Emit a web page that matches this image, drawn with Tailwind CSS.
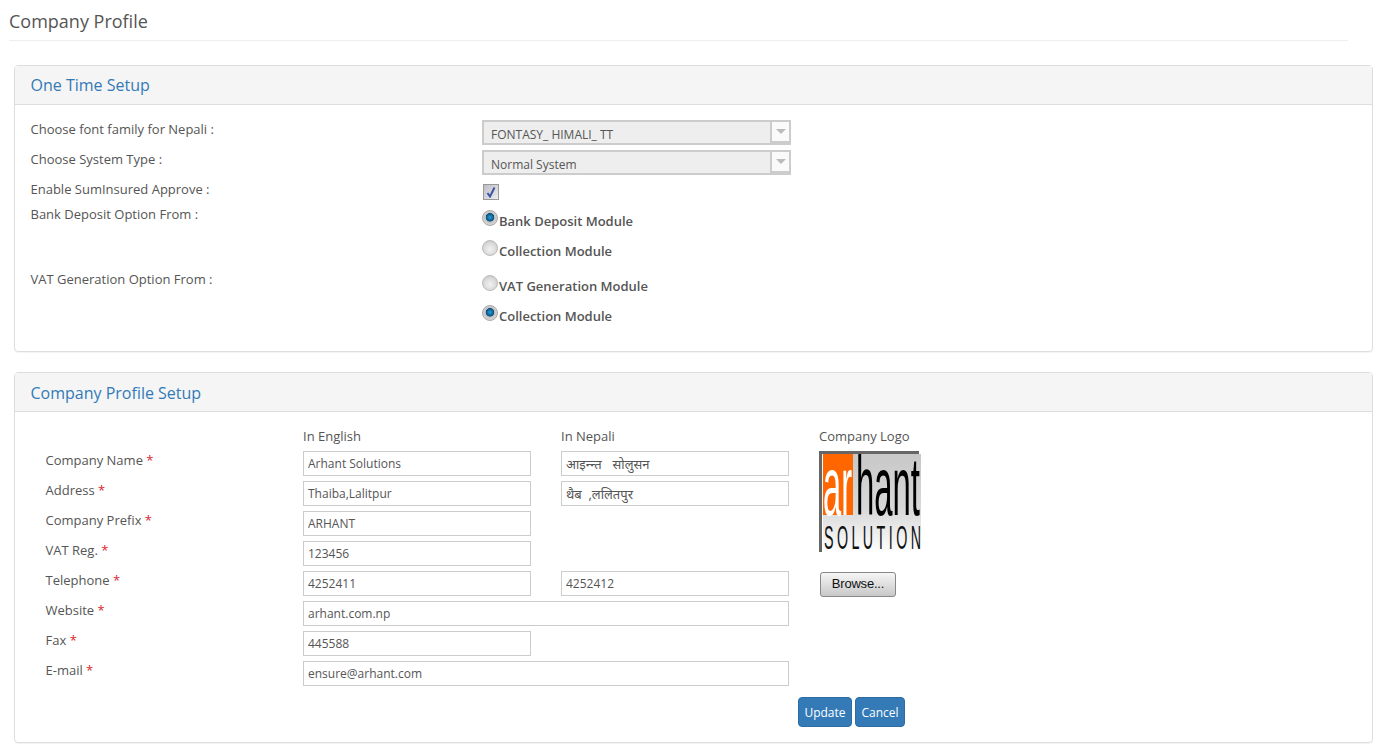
<!DOCTYPE html>
<html>
<head>
<meta charset="utf-8">
<script src="https://cdn.jsdelivr.net/npm/@tailwindcss/browser@4"></script>
</head>
<body class="bg-white font-['Open_Sans','Noto_Sans',sans-serif] text-[13px] text-[#555] overflow-hidden">
<div class="h-[746px] w-[1373px] overflow-hidden">
  <div class="ml-[9px] mr-[25px] h-[41px] border-b border-[#eee]">
    <h1 class="pt-[9px] text-[18px] leading-[25px] text-[#555]">Company Profile</h1>
  </div>

  <section class="ml-[14px] mt-[24px] h-[287px] rounded-[4px] border border-[#ddd] shadow-[0_1px_1px_rgba(0,0,0,0.05)]">
    <div class="h-[39px] border-b border-[#ddd] bg-[#f5f5f5] pl-[15.5px] text-[16px] leading-[39px] text-[#337ab7]">One Time Setup</div>
    <div class="pl-[15px] pt-[15px]">
      <div class="flex h-[30px]">
        <label class="w-[452px] pl-[0.5px] leading-[18px]">Choose font family for Nepali :</label>
        <div class="relative h-[25px] w-[309px]">
          <select class="h-[25px] w-full appearance-none border-2 border-[#ccc] bg-[#eee] pl-[7px] pt-[4px] text-[12px]"><option>FONTASY_ HIMALI_ TT</option></select>
          <span class="absolute right-0 top-0 flex h-[23px] w-[21px] items-center justify-center border-2 border-[#ccc] bg-[#fafafa]"><span class="h-0 w-0 border-x-[5px] border-t-[5px] border-x-transparent border-t-[#bbb]"></span></span>
        </div>
      </div>
      <div class="flex h-[30px]">
        <label class="w-[452px] pl-[0.5px] leading-[18px]">Choose System Type :</label>
        <div class="relative h-[25px] w-[309px]">
          <select class="h-[25px] w-full appearance-none border-2 border-[#ccc] bg-[#eee] pl-[7px] pt-[4px] text-[12px]"><option>Normal System</option></select>
          <span class="absolute right-0 top-0 flex h-[23px] w-[21px] items-center justify-center border-2 border-[#ccc] bg-[#fafafa]"><span class="h-0 w-0 border-x-[5px] border-t-[5px] border-x-transparent border-t-[#bbb]"></span></span>
        </div>
      </div>
      <div class="flex h-[25px]">
        <label class="w-[452px] pl-[0.5px] leading-[18px]">Enable SumInsured Approve :</label>
        <span class="ml-px mt-[4px] flex h-[16px] w-[16px] items-center justify-center border border-[#999] bg-gradient-to-br from-[#bcbcc4] to-[#eeeeee]">
          <svg width="12" height="12" viewBox="0 0 12 12"><path d="M2.5 7 L5 10.5 L9.5 1.5" fill="none" stroke="#3b55a5" stroke-width="2"/></svg>
        </span>
      </div>
      <div class="flex h-[65px]">
        <label class="w-[452px] pl-[0.5px] leading-[18px]">Bank Deposit Option From :</label>
        <div class="font-semibold">
          <div class="flex h-[30px] items-start pt-[4px]"><span class="mr-px mt-px h-[16px] w-[16px] rounded-full border border-[#aaa] bg-[radial-gradient(circle_at_50%_45%,#2fa0d8_0%,#0b5c8e_32%,#0b4f7c_38%,#c4c4c4_44%,#e4e4e4_100%)]"></span><span class="mt-[3px] leading-[18px]">Bank Deposit Module</span></div>
          <div class="flex h-[30px] items-start pt-[4px]"><span class="mr-px mt-px h-[16px] w-[16px] rounded-full border border-[#bbb] bg-[radial-gradient(circle_at_50%_60%,#f2f2f2_0%,#d8d8d8_60%,#bbb_100%)]"></span><span class="mt-[3px] leading-[18px]">Collection Module</span></div>
        </div>
      </div>
      <div class="flex h-[60px]">
        <label class="w-[452px] pl-[0.5px] leading-[18px]">VAT Generation Option From :</label>
        <div class="font-semibold">
          <div class="flex h-[30px] items-start pt-[4px]"><span class="mr-px mt-px h-[16px] w-[16px] rounded-full border border-[#bbb] bg-[radial-gradient(circle_at_50%_60%,#f2f2f2_0%,#d8d8d8_60%,#bbb_100%)]"></span><span class="mt-[3px] leading-[18px]">VAT Generation Module</span></div>
          <div class="flex h-[30px] items-start pt-[4px]"><span class="mr-px mt-px h-[16px] w-[16px] rounded-full border border-[#aaa] bg-[radial-gradient(circle_at_50%_45%,#2fa0d8_0%,#0b5c8e_32%,#0b4f7c_38%,#c4c4c4_44%,#e4e4e4_100%)]"></span><span class="mt-[3px] leading-[18px]">Collection Module</span></div>
        </div>
      </div>
    </div>
  </section>

  <section class="ml-[14px] mt-[20px] h-[371px] rounded-[4px] border border-[#ddd] shadow-[0_1px_1px_rgba(0,0,0,0.05)]">
    <div class="h-[39px] border-b border-[#ddd] bg-[#f5f5f5] pl-[15.5px] text-[16px] leading-[40px] text-[#337ab7]">Company Profile Setup</div>
    <div class="relative pl-[30px] pt-[15px]">
      <div class="grid grid-cols-[258px_258px_258px_1fr] grid-rows-[24px] auto-rows-[30px]">
        <div></div><div class="leading-[18px]">In English</div><div class="leading-[18px]">In Nepali</div><div class="leading-[18px]">Company Logo</div>

        <label class="pl-[0.5px] leading-[18px]">Company Name <b class="font-normal text-[#d9262c]">*</b></label>
        <input class="h-[25px] w-[228px] border border-[#ccc] px-[4px] text-[12px]" value="Arhant Solutions">
        <input class="h-[25px] w-[228px] border border-[#ccc] px-[4px] text-[13px] [word-spacing:2px]" value="आइन्न्त  सोलुसन">
        <div class="row-span-4 h-[102px]">
          <svg width="104" height="102" viewBox="0 0 104 102" role="img" aria-label="arhant SOLUTION logo">
            <defs><linearGradient id="g" x1="0" y1="0" x2="0" y2="1"><stop offset="0" stop-color="#c8c8c8"/><stop offset="0.55" stop-color="#d8d8d8"/><stop offset="1" stop-color="#ffffff"/></linearGradient></defs>
            <rect x="4" y="3" width="98" height="99" fill="url(#g)"/>
            <path d="M0 0H100V3H3V101H0Z" fill="#666"/>
            <rect x="4" y="3" width="30" height="61" fill="#ff6600"/>
            <text x="4" y="64" font-family="Liberation Sans" font-size="84" fill="#fff" textLength="29" lengthAdjust="spacingAndGlyphs">ar</text>
            <text x="37" y="64" font-family="Liberation Sans" font-size="84" fill="#000" textLength="64" lengthAdjust="spacingAndGlyphs">hant</text>
            <g transform="translate(5,98) scale(0.42,1)"><text x="0" y="0" font-family="Liberation Sans" font-size="34" fill="#111" textLength="231" lengthAdjust="spacing">SOLUTION</text></g>
          </svg>
        </div>

        <label class="pl-[0.5px] leading-[18px]">Address <b class="font-normal text-[#d9262c]">*</b></label>
        <input class="h-[25px] w-[228px] border border-[#ccc] px-[4px] text-[12px]" value="Thaiba,Lalitpur">
        <input class="h-[25px] w-[228px] border border-[#ccc] px-[4px] text-[13px]" value="थैब  ,ललितपुर">

        <label class="pl-[0.5px] leading-[18px]">Company Prefix <b class="font-normal text-[#d9262c]">*</b></label>
        <input class="col-span-2 h-[25px] w-[228px] border border-[#ccc] px-[4px] text-[12px]" value="ARHANT">

        <label class="pl-[0.5px] leading-[18px]">VAT Reg. <b class="font-normal text-[#d9262c]">*</b></label>
        <input class="col-span-2 h-[25px] w-[228px] border border-[#ccc] px-[4px] text-[12px]" value="123456">

        <label class="pl-[0.5px] leading-[18px]">Telephone <b class="font-normal text-[#d9262c]">*</b></label>
        <input class="h-[25px] w-[228px] border border-[#ccc] px-[4px] text-[12px]" value="4252411">
        <input class="h-[25px] w-[228px] border border-[#ccc] px-[4px] text-[12px]" value="4252412">
        <div class="pl-px pt-px"><button class="h-[25px] w-[76px] rounded-[3px] border border-[#888] bg-gradient-to-b from-[#f6f6f6] to-[#c8c8c8] pb-px font-['Liberation_Sans',sans-serif] text-[13px] tracking-[-0.2px] text-[#111]">Browse...</button></div>

        <label class="pl-[0.5px] leading-[18px]">Website <b class="font-normal text-[#d9262c]">*</b></label>
        <input class="col-span-2 h-[25px] w-[486px] border border-[#ccc] px-[4px] text-[12px]" value="arhant.com.np">
        <div></div>

        <label class="pl-[0.5px] leading-[18px]">Fax <b class="font-normal text-[#d9262c]">*</b></label>
        <input class="col-span-2 h-[25px] w-[228px] border border-[#ccc] px-[4px] text-[12px]" value="445588">
        <div></div>

        <label class="pl-[0.5px] leading-[18px]">E-mail <b class="font-normal text-[#d9262c]">*</b></label>
        <input class="col-span-2 h-[25px] w-[486px] border border-[#ccc] px-[4px] text-[12px]" value="ensure@arhant.com">
        <div></div>
      </div>
      <div class="ml-[753px] mt-[6px] flex gap-[3px]">
        <button class="h-[30px] w-[54px] rounded-[4px] border border-[#2e6da4] bg-[#337ab7] pt-px text-[12px] text-white">Update</button>
        <button class="h-[30px] w-[50px] rounded-[4px] border border-[#2e6da4] bg-[#337ab7] pt-px text-[12px] text-white">Cancel</button>
      </div>
    </div>
  </section>
</div>
</body>
</html>
